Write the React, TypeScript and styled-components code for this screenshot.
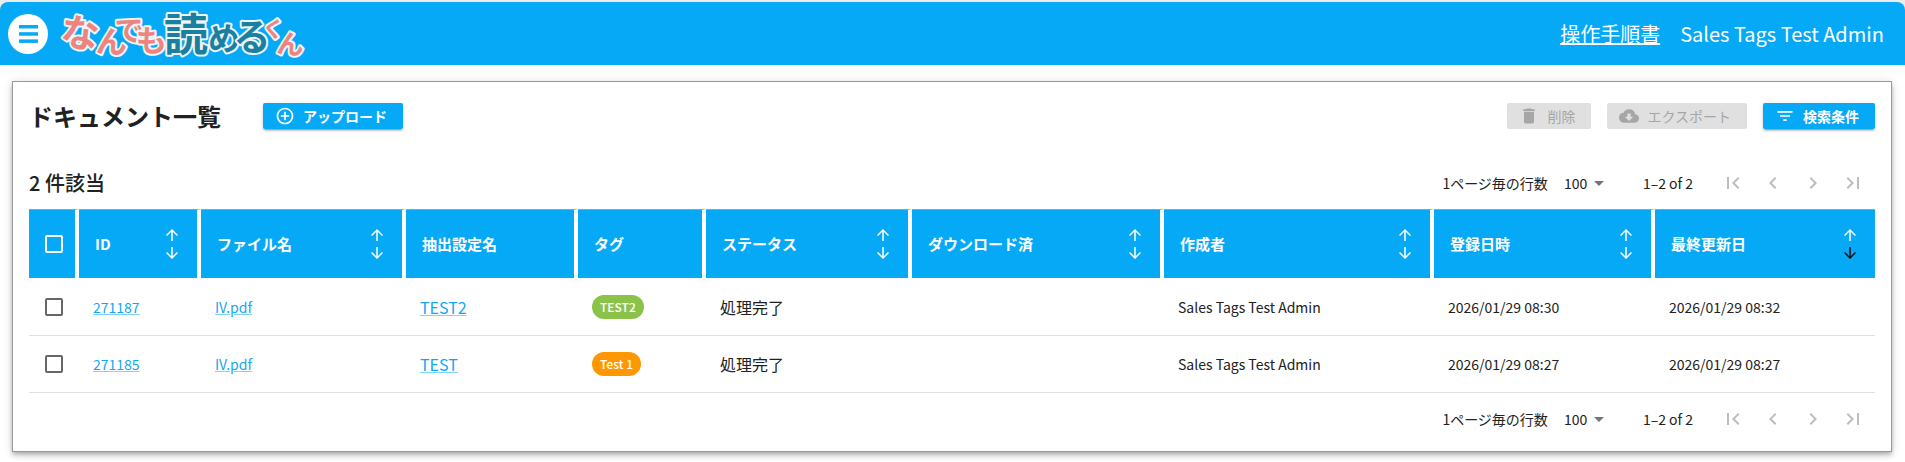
import React from "react";
import styled, { createGlobalStyle, css } from "styled-components";
import {
  MdArrowDownward,
  MdArrowDropDown,
  MdArrowUpward,
  MdChevronLeft,
  MdChevronRight,
  MdCloudDownload,
  MdDelete,
  MdFilterList,
  MdFirstPage,
  MdLastPage,
  MdOutlineAddCircleOutline,
} from "react-icons/md";

const BLUE = "#05a9f6";

const GlobalStyle = createGlobalStyle`
  * { box-sizing: border-box; }
  body {
    margin: 0;
    background: #fff;
    color: #212121;
    font-family: "Noto Sans CJK JP", "Noto Sans", sans-serif;
    font-size: 14px;
  }
  button, select, input { font: inherit; margin: 0; }
`;

const Frame = styled.div`
  padding-top: 2px;
  background: linear-gradient(#ececec 0 16px, #fff 16px);
`;

const Header = styled.header`
  display: flex;
  align-items: center;
  height: 63px;
  padding: 0 21px 0 8px;
  gap: 12px;
  border-radius: 8px 8px 0 0;
  background: ${BLUE};
  color: #fff;
`;

const MenuButton = styled.button`
  display: grid;
  place-items: center;
  width: 40px;
  height: 40px;
  padding: 0;
  border: 0;
  border-radius: 50%;
  background: #fff;
  color: ${BLUE};
`;

const Logo = styled.svg`
  display: block;
  width: 250px;
  height: 56px;
  overflow: visible;
  font-weight: 700;
  paint-order: stroke;
  stroke: #eef4f7;
  stroke-width: 4px;
  stroke-linejoin: round;
`;

const HeaderLinks = styled.nav`
  display: flex;
  align-items: center;
  gap: 20px;
  margin-left: auto;
  font-size: 20px;
  line-height: 28px;
`;

const ManualLink = styled.a`
  color: #fff;
`;

const Card = styled.main`
  margin: 16px 13px 10px 12px;
  padding: 21px 16px 6px;
  border: 1px solid #999;
  background: #fff;
  box-shadow:
    0 2px 4px -1px rgba(0, 0, 0, 0.2),
    0 4px 5px rgba(0, 0, 0, 0.14),
    0 1px 10px rgba(0, 0, 0, 0.12);
`;

const Toolbar = styled.div`
  display: flex;
  align-items: center;
  gap: 16px;
  height: 26px;
`;

const Title = styled.h1`
  margin: 0 26px 0 0;
  font-size: 24px;
  line-height: 32px;
  font-weight: 700;
`;

const Spacer = styled.div`
  flex: 1;
`;

const ActionButton = styled.button`
  display: flex;
  align-items: center;
  gap: 8px;
  height: 26px;
  padding: 0 16px 0 12px;
  border: 0;
  border-radius: 2px;
  background: ${BLUE};
  color: #fff;
  font-size: 14px;
  line-height: 20px;
  font-weight: 700;
  white-space: nowrap;
  box-shadow:
    0 3px 1px -2px rgba(0, 0, 0, 0.2),
    0 2px 2px rgba(0, 0, 0, 0.14),
    0 1px 5px rgba(0, 0, 0, 0.12);

  &:disabled {
    background: #e0e0e0;
    color: #a6a6a6;
    font-weight: 400;
    box-shadow: none;
  }
`;

const TableBar = styled.div`
  display: flex;
  align-items: center;
  justify-content: space-between;
  height: 52px;
  margin-top: 28px;
`;

const Count = styled.h2`
  margin: 0;
  font-size: 20px;
  line-height: 28px;
  font-weight: 500;
`;

const Pager = styled.div`
  display: flex;
  align-items: center;
  justify-content: flex-end;
  height: 52px;
  margin-left: auto;
  padding-right: 2px;
  line-height: 20px;
  color: #212121;
`;

const SelectWrap = styled.span`
  display: flex;
  align-items: center;
  margin: 0 32px 0 16px;
`;

const RowsSelect = styled.select`
  appearance: none;
  width: 47px;
  height: 24px;
  padding: 0;
  border: 0;
  background: transparent;
  color: inherit;
`;

const SelectArrow = styled(MdArrowDropDown)`
  margin-left: -24px;
  color: #757575;
  pointer-events: none;
`;

const PagerButtons = styled.div`
  display: flex;
  margin-left: 20px;
`;

const PageButton = styled.button`
  display: grid;
  place-items: center;
  width: 40px;
  height: 40px;
  padding: 0;
  border: 0;
  background: none;
  color: #bdbdbd;
`;

const TableScroll = styled.div`
  overflow-x: auto;
`;

const Table = styled.table`
  width: 100%;
  table-layout: fixed;
  border-collapse: separate;
  border-spacing: 0;
`;

const Col = styled.col<{ $width: number }>`
  width: ${(p) => p.$width}px;
`;

const HeadCell = styled.th`
  height: 69px;
  padding: 0 16px;
  border-top: 1px solid #4db8ea;
  border-right: 4px solid #fff;
  background: ${BLUE};
  background-clip: padding-box;
  color: #fff;
  font-size: 15px;
  line-height: 20px;
  font-weight: 700;
  text-align: left;
  white-space: nowrap;

  &:last-child {
    border-right: 0;
  }
`;

const HeadContent = styled.div`
  display: flex;
  align-items: center;
  justify-content: space-between;
`;

const SortButton = styled.button`
  display: flex;
  flex-direction: column;
  padding: 0;
  border: 0;
  background: none;
  color: #fff;
`;

const SortDown = styled(MdArrowDownward)<{ $active: boolean }>`
  color: ${(p) => (p.$active ? "#111" : "#fff")};
`;

const Cell = styled.td<{ $large?: boolean }>`
  height: 57px;
  padding: 0 14px;
  border-bottom: 1px solid #e0e0e0;
  line-height: 24px;
  white-space: nowrap;
  ${(p) => p.$large && css`font-size: 16px;`}

  tr:first-child > & {
    height: 58px;
    padding-top: 1px;
  }
`;

const CheckCell = styled(Cell)`
  padding: 0 16px;

  tr:first-child > & {
    padding-left: 16px;
  }
`;

const Checkbox = styled.input<{ $light?: boolean }>`
  appearance: none;
  display: block;
  width: 18px;
  height: 18px;
  border: 2px solid ${(p) => (p.$light ? "#fff" : "#666")};
  border-radius: 2px;

  &:checked {
    background: ${BLUE};
  }
`;

const TextLink = styled.a`
  color: #11a8f2;
  text-decoration: underline;
  text-decoration-color: rgba(3, 169, 244, 0.5);
`;

const Tag = styled.span<{ $color: string }>`
  display: block;
  width: fit-content;
  padding: 0 8px;
  border-radius: 12px;
  background: ${(p) => p.$color};
  color: #fff;
  font-size: 12px;
  line-height: 24px;
  font-weight: 500;
`;

const columns = [
  { label: "ID", width: 122, sortable: true },
  { label: "ファイル名", width: 205, sortable: true },
  { label: "抽出設定名", width: 172, sortable: false },
  { label: "タグ", width: 128, sortable: false },
  { label: "ステータス", width: 206, sortable: true },
  { label: "ダウンロード済", width: 252, sortable: true },
  { label: "作成者", width: 270, sortable: true },
  { label: "登録日時", width: 221, sortable: true },
  { label: "最終更新日", width: 220, sortable: true, active: true },
];

const documents = [
  { id: "271187", file: "IV.pdf", setting: "TEST2", tag: "TEST2", color: "#8bc34a", status: "処理完了", author: "Sales Tags Test Admin", created: "2026/01/29 08:30", updated: "2026/01/29 08:32" },
  { id: "271185", file: "IV.pdf", setting: "TEST", tag: "Test 1", color: "#ff9800", status: "処理完了", author: "Sales Tags Test Admin", created: "2026/01/29 08:27", updated: "2026/01/29 08:27" },
];

const CORAL = "#ee8480";
const TEAL = "#1b7f9f";

// Each letter: centre x, baseline, size, tilt, colour
const logoLetters = [
  { ch: "な", x: 20, y: 41, size: 38, tilt: 8, color: CORAL },
  { ch: "ん", x: 52, y: 47, size: 31, tilt: 4, color: CORAL },
  { ch: "で", x: 69, y: 35, size: 29, tilt: 2, color: CORAL },
  { ch: "も", x: 91, y: 46, size: 31, tilt: -4, color: CORAL },
  { ch: "読", x: 126, y: 45, size: 44, tilt: 0, color: TEAL },
  { ch: "め", x: 164, y: 44, size: 32, tilt: 0, color: TEAL },
  { ch: "る", x: 192, y: 45, size: 37, tilt: 0, color: TEAL },
  { ch: "く", x: 214, y: 31, size: 22, tilt: 8, color: CORAL },
  { ch: "ん", x: 231, y: 48, size: 27, tilt: 6, color: CORAL },
];

function MenuIcon() {
  return (
    <svg width="19" height="18" viewBox="0 0 19 18" fill="currentColor" aria-hidden="true">
      <rect width="19" height="3.5" />
      <rect y="7.2" width="19" height="3.5" />
      <rect y="14.4" width="19" height="3.5" />
    </svg>
  );
}

function BrandLogo() {
  return (
    <Logo viewBox="0 0 250 56" role="img" aria-label="なんでも読めるくん">
      {logoLetters.map((l, i) => (
        <text key={i} x={l.x} y={l.y} fontSize={l.size} fill={l.color} textAnchor="middle" transform={`rotate(${l.tilt} ${l.x} ${l.y - 14})`}>
          {l.ch}
        </text>
      ))}
    </Logo>
  );
}

function Pagination({ id }: { id: string }) {
  return (
    <Pager>
      <label htmlFor={id}>1ページ毎の行数</label>
      <SelectWrap>
        <RowsSelect id={id} defaultValue="100">
          <option>25</option>
          <option>50</option>
          <option>100</option>
        </RowsSelect>
        <SelectArrow size={24} />
      </SelectWrap>
      <span>1–2 of 2</span>
      <PagerButtons>
        <PageButton disabled aria-label="最初のページ"><MdFirstPage size={24} /></PageButton>
        <PageButton disabled aria-label="前のページ"><MdChevronLeft size={24} /></PageButton>
        <PageButton disabled aria-label="次のページ"><MdChevronRight size={24} /></PageButton>
        <PageButton disabled aria-label="最後のページ"><MdLastPage size={24} /></PageButton>
      </PagerButtons>
    </Pager>
  );
}

export default function App() {
  return (
    <>
      <GlobalStyle />
      <Frame>
        <Header>
          <MenuButton aria-label="メニュー"><MenuIcon /></MenuButton>
          <BrandLogo />
          <HeaderLinks>
            <ManualLink href="#manual">操作手順書</ManualLink>
            <span>Sales Tags Test Admin</span>
          </HeaderLinks>
        </Header>
      </Frame>
      <Card>
        <Toolbar>
          <Title>ドキュメント一覧</Title>
          <ActionButton><MdOutlineAddCircleOutline size={20} />アップロード</ActionButton>
          <Spacer />
          <ActionButton disabled><MdDelete size={20} />削除</ActionButton>
          <ActionButton disabled><MdCloudDownload size={20} />エクスポート</ActionButton>
          <ActionButton><MdFilterList size={20} />検索条件</ActionButton>
        </Toolbar>
        <TableBar>
          <Count>2 件該当</Count>
          <Pagination id="rows-top" />
        </TableBar>
        <TableScroll>
          <Table>
            <colgroup>
              <Col $width={50} />
              {columns.map((c) => <Col key={c.label} $width={c.width} />)}
            </colgroup>
            <thead>
              <tr>
                <HeadCell><Checkbox type="checkbox" $light aria-label="すべて選択" /></HeadCell>
                {columns.map((c) => (
                  <HeadCell key={c.label}>
                    <HeadContent>
                      {c.label}
                      {c.sortable && (
                        <SortButton aria-label={`${c.label}で並べ替え`}>
                          <MdArrowUpward size={18} />
                          <SortDown size={18} $active={!!c.active} />
                        </SortButton>
                      )}
                    </HeadContent>
                  </HeadCell>
                ))}
              </tr>
            </thead>
            <tbody>
              {documents.map((d) => (
                <tr key={d.id}>
                  <CheckCell><Checkbox type="checkbox" aria-label={`${d.id}を選択`} /></CheckCell>
                  <Cell><TextLink href={`#${d.id}`}>{d.id}</TextLink></Cell>
                  <Cell><TextLink href={`#file-${d.id}`}>{d.file}</TextLink></Cell>
                  <Cell $large><TextLink href={`#setting-${d.id}`}>{d.setting}</TextLink></Cell>
                  <Cell><Tag $color={d.color}>{d.tag}</Tag></Cell>
                  <Cell $large>{d.status}</Cell>
                  <Cell />
                  <Cell>{d.author}</Cell>
                  <Cell>{d.created}</Cell>
                  <Cell>{d.updated}</Cell>
                </tr>
              ))}
            </tbody>
          </Table>
        </TableScroll>
        <Pagination id="rows-bottom" />
      </Card>
    </>
  );
}
